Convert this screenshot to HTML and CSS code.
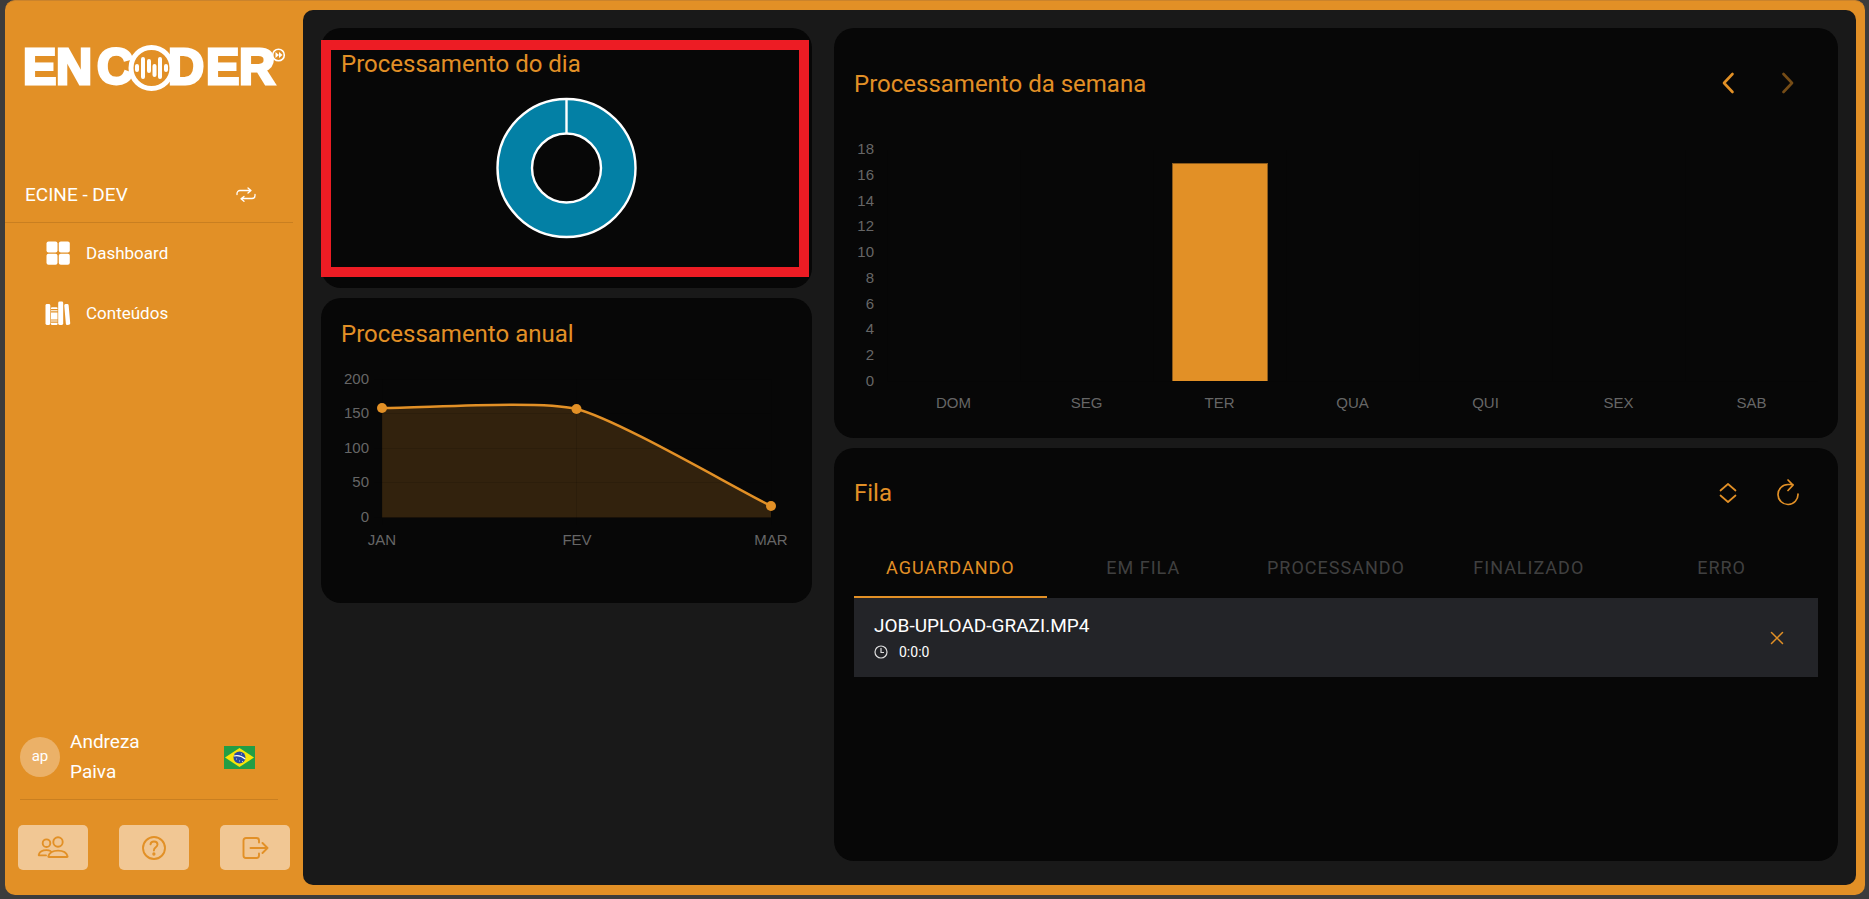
FILE: index.html
```html
<!DOCTYPE html>
<html lang="pt-BR">
<head>
<meta charset="utf-8">
<title>Encoder - Dashboard</title>
<link rel="stylesheet" href="styles.css">
</head>
<body>
<div class="app">
  <aside class="sidebar">
    <svg class="logo" width="272" height="80" viewBox="20 30 272 80" role="img" aria-label="Encoder">
      <g class="logo-text">
        <text y="84" x="23 56 97">ENC</text>
        <text y="84" x="168 206 239">DER</text>
      </g>
      <circle cx="151.500" cy="68" r="20.500" fill="#e29026" stroke="#fff" stroke-width="5"/>
      <g stroke="#fff" stroke-width="4" stroke-linecap="round">
        <path d="M137 66v4M143 59v18M149 61v10M154.500 66v9M160 59v18M166 66v4"/>
      </g>
      <circle cx="278.500" cy="55" r="5.800" fill="#e29026" stroke="#fff" stroke-width="1.600"/>
      <path d="M275.500 52l3.500 3-3.500 3zM279 52l3.500 3-3.500 3z" fill="#fff"/>
    </svg>
    <div class="account">
      <span>ECINE - DEV</span>
      <button class="plain" type="button" aria-label="Trocar conta">
        <svg width="20" height="16" viewBox="0 0 20 16" fill="none" stroke="#fff" stroke-width="1.300" stroke-linecap="round" stroke-linejoin="round"><path d="M1 7.500V6.500A3 3 0 0 1 4 3.500H14.500M12 1l3 2.500L12 6M19 7.500v1a3 3 0 0 1-3 3H5.500M8 9.500L5 11.800 8 14.300"/></svg>
      </button>
    </div>
    <nav class="menu">
      <a href="#dashboard">
        <svg width="26" height="26" viewBox="0 0 26 26" fill="#fff"><rect x="1.500" y="1.500" width="11" height="11" rx="2"/><rect x="13.800" y="1.500" width="11" height="11" rx="2"/><rect x="1.500" y="13.800" width="11" height="11" rx="2"/><rect x="13.800" y="13.800" width="11" height="11" rx="2"/></svg>
        Dashboard
      </a>
      <a href="#conteudos">
        <svg width="26" height="26" viewBox="0 0 26 26" fill="#fff"><rect x=".5" y="4" width="4.800" height="21" rx="1.400"/><path d="M6 9V8.200a1 1 0 0 1 1-1h4.500a1 1 0 0 1 1 1V9zM6 10.300h6.500v1H6zM6 12.500h6.500v7H6zM6 20.500h6.500v1H6zM6 22.700h6.500V24a1 1 0 0 1-1 1H7a1 1 0 0 1-1-1z"/><rect x="13.200" y="1.500" width="5" height="23.500" rx="1.400"/><rect x="20" y="4" width="4.400" height="21" rx="1.400" transform="rotate(-5 22 14)"/></svg>
        Conteúdos
      </a>
    </nav>
    <div class="user">
      <span class="avatar">ap</span>
      <span class="user-name">Andreza Paiva</span>
      <svg class="flag" width="31" height="23" viewBox="0 0 31 23" role="img" aria-label="Português (Brasil)"><path fill="#229e45" d="M0 0h31v23H0z"/><path fill="#f8e509" d="M15.500 2L30 11.500 15.500 21 1 11.500z"/><circle cx="15.500" cy="11.500" r="6" fill="#2b49a3"/><path d="M10 10q6-1.500 11.200 3" fill="none" stroke="#ffffef" stroke-width="1.200"/><path d="M12 13h1M15 15h1M18 15.500h1M17 8h1" stroke="#ffffef" stroke-width=".7"/></svg>
    </div>
    <div class="actions">
      <button type="button" aria-label="Usuários">
        <svg width="32" height="26" viewBox="0 0 32 26" fill="none" stroke="#e29026" stroke-width="1.900" stroke-linecap="round" stroke-linejoin="round"><circle cx="21" cy="7" r="4.700"/><circle cx="9.500" cy="8.200" r="3.800"/><path d="M12 22c-.6 0-.8-.5-.6-1C12.500 17.300 16.500 15.600 21 15.600s8.500 1.700 9.500 5.400c.2.500 0 1-.6 1zM13.500 16c-1.200-.6-2.500-.9-4-.9-4 0-6.800 1.700-7.700 4.400-.2.500 0 .9.600.9H9"/></svg>
      </button>
      <button type="button" aria-label="Ajuda">
        <svg width="26" height="26" viewBox="0 0 26 26" fill="none" stroke="#e29026" stroke-width="1.900" stroke-linecap="round" stroke-linejoin="round"><circle cx="13" cy="13" r="11"/><path d="M9.500 9.300C9.700 7.300 11.200 6.500 13 6.500c2 0 3.500 1.200 3.500 3 0 3-3.600 2.700-3.600 6"/><circle cx="12.900" cy="19" r=".7" fill="#e29026"/></svg>
      </button>
      <button type="button" aria-label="Sair">
        <svg width="28" height="26" viewBox="0 0 28 26" fill="none" stroke="#e29026" stroke-width="1.900" stroke-linecap="round" stroke-linejoin="round"><path d="M18 7.500V5.500a2.500 2.500 0 0 0-2.500-2.500H5a2.500 2.500 0 0 0-2.500 2.500v15A2.500 2.500 0 0 0 5 23h10.500a2.500 2.500 0 0 0 2.500-2.500v-2M9.500 13H26.500M21.500 8l5 5-5 5"/></svg>
      </button>
    </div>
  </aside>

  <main class="panel">
    <div class="column">
      <section class="card day">
        <h2>Processamento do dia</h2>
        <svg class="donut" width="140" height="140" viewBox="0 0 140 140" role="img" aria-label="Gráfico do dia"><path d="M69.500 1a69 69 0 1 1 0 138a69 69 0 1 1 0-138zM69.500 35.500a34.500 34.500 0 1 0 0 69a34.500 34.500 0 1 0 0-69z" fill="#0380a5" stroke="#fff" stroke-width="2.400"/><path d="M69.500 1v34.500" stroke="#fff" stroke-width="2.400"/></svg>
        <div class="highlight"></div>
      </section>
      <section class="card year">
        <h2>Processamento anual</h2>
        <svg class="area-chart" viewBox="341 364 451 190" role="img" aria-label="Gráfico anual">
          <path d="M382 409C421 409.200 539.800 400.800 576.500 410C617.500 420.300 732 487.600 771 507V518.500H382z" fill="#e29026" fill-opacity=".2"/>
          <path class="grid-line" d="M374 380.500H771M374 414.500H771M374 449.500H771M374 483.500H771M374 518.500H771M382.500 380V526M576.500 380V526M771.500 380V526"/>
          <path d="M382 409C421 409.200 539.800 400.800 576.500 410C617.500 420.300 732 487.600 771 507" fill="none" stroke="#e29026" stroke-width="2.400"/>
          <g fill="#e29026"><circle cx="382" cy="409" r="5"/><circle cx="576.500" cy="410" r="5"/><circle cx="771" cy="507" r="5"/></g>
          <g class="ticks" text-anchor="end">
            <text x="369" y="385">200</text><text x="369" y="419">150</text><text x="369" y="454">100</text><text x="369" y="488">50</text><text x="369" y="523">0</text>
          </g>
          <g class="ticks" text-anchor="middle">
            <text x="382" y="546">JAN</text><text x="577" y="546">FEV</text><text x="771" y="546">MAR</text>
          </g>
        </svg>
      </section>
    </div>

    <div class="column">
      <section class="card week">
        <header>
          <h2>Processamento da semana</h2>
          <button class="plain" type="button" aria-label="Semana anterior"><svg width="26" height="26" viewBox="0 0 26 26"><path d="M17.500 3L9 12l8.500 9" fill="none" stroke="#e29026" stroke-width="2.600" stroke-linecap="round" stroke-linejoin="round"/></svg></button>
          <button class="plain" type="button" aria-label="Próxima semana" disabled><svg width="26" height="26" viewBox="0 0 26 26"><path d="M8.500 3l8.500 9-8.500 9" fill="none" stroke="#e29026" stroke-width="2.600" stroke-linecap="round" stroke-linejoin="round"/></svg></button>
        </header>
        <div class="bar-chart">
          <div class="scale"><span>18</span><span>16</span><span>14</span><span>12</span><span>10</span><span>8</span><span>6</span><span>4</span><span>2</span><span>0</span></div>
          <div class="plot"><i></i><i></i><i><b class="bar" style="height:94.4%"></b></i><i></i><i></i><i></i><i></i></div>
          <div class="days"><span>DOM</span><span>SEG</span><span>TER</span><span>QUA</span><span>QUI</span><span>SEX</span><span>SAB</span></div>
        </div>
      </section>

      <section class="card queue">
        <header>
          <h2>Fila</h2>
          <button class="plain" type="button" aria-label="Expandir"><svg width="26" height="26" viewBox="0 0 26 26"><path d="M5.500 10.500L13 4l7.500 6.500M5.500 15.500L13 22l7.500-6.500" fill="none" stroke="#e29026" stroke-width="1.700" stroke-linecap="round" stroke-linejoin="round"/></svg></button>
          <button class="plain" type="button" aria-label="Atualizar"><svg width="26" height="28" viewBox="0 0 26 28"><path d="M23 15A10 10 0 1 1 13 5.500H18M13 1l5 5.200-5 5.300" fill="none" stroke="#e29026" stroke-width="1.700" stroke-linecap="round" stroke-linejoin="round"/></svg></button>
        </header>
        <div class="tabs" role="tablist">
          <button type="button" role="tab" aria-selected="true">AGUARDANDO</button>
          <button type="button" role="tab" aria-selected="false">EM FILA</button>
          <button type="button" role="tab" aria-selected="false">PROCESSANDO</button>
          <button type="button" role="tab" aria-selected="false">FINALIZADO</button>
          <button type="button" role="tab" aria-selected="false">ERRO</button>
        </div>
        <div class="job">
          <div class="job-info">
            <span class="job-name">JOB-UPLOAD-GRAZI.MP4</span>
            <span class="job-time"><svg width="14" height="14" viewBox="0 0 14 14" fill="none" stroke="#ddd" stroke-width="1.200"><circle cx="7" cy="7" r="6"/><path d="M7 3v4.500h3"/></svg>0:0:0</span>
          </div>
          <button class="plain" type="button" aria-label="Remover"><svg width="14" height="14" viewBox="0 0 14 14"><path d="M1.500 1.500l11 11M12.500 1.500l-11 11" stroke="#e29026" stroke-width="1.500" stroke-linecap="round"/></svg></button>
        </div>
      </section>
    </div>
  </main>
</div>
</body>
</html>
```
FILE: styles.css
```css
* { box-sizing: border-box; }

body {
  display: flex;
  min-height: 100vh;
  margin: 0;
  padding: 0 4px 4px 5px;
  background: #3c3c3c;
  color: #fff;
  font-family: Roboto, "Liberation Sans", sans-serif;
}

h2 {
  margin: 0;
  color: #e29026;
  font-size: 24px;
  font-weight: 400;
  line-height: 30px;
}

button {
  padding: 0;
  border: 0;
  font: inherit;
  color: inherit;
  cursor: pointer;
}

.plain { background: none; }
.plain:disabled { opacity: .5; }
svg { display: block; }

.app {
  display: flex;
  flex: 1;
  min-width: 0;
  background: #e29026;
  border-top: 1px solid #ca832c;
  border-radius: 10px;
}

/* Sidebar */
.sidebar {
  display: flex;
  flex-direction: column;
  width: 298px;
  flex: none;
}

.logo { margin: 29px 0 0 15px; }

.logo-text {
  fill: #fff;
  stroke: #fff;
  stroke-width: 3px;
  font-family: "Liberation Sans", Arial, sans-serif;
  font-size: 50px;
  font-weight: 700;
}

.account {
  display: flex;
  align-items: center;
  justify-content: space-between;
  height: 56px;
  margin: 57px 10px 0 0;
  padding: 0 37px 0 20px;
  border-bottom: 1px solid #c97f20;
  font-size: 19px;
}

.menu { display: flex; flex-direction: column; }

.menu a {
  display: flex;
  align-items: center;
  gap: 15px;
  height: 60px;
  padding-left: 40px;
  color: #fff;
  font-size: 17px;
  text-decoration: none;
}

.user {
  display: flex;
  align-items: center;
  margin: auto 25px 0 15px;
  padding-bottom: 12px;
  border-bottom: 1px solid #c97f20;
}

.avatar {
  width: 40px;
  height: 40px;
  border-radius: 50%;
  background: #ebb168;
  font-size: 15px;
  line-height: 38px;
  text-align: center;
}

.user-name {
  width: 90px;
  margin-left: 10px;
  font-size: 19px;
  line-height: 30px;
}

.flag { margin: 0 23px 0 auto; }

.actions {
  display: flex;
  justify-content: space-between;
  margin: 25px 13px 25px;
}

.actions button {
  display: grid;
  place-items: center;
  width: 70px;
  height: 45px;
  border-radius: 5px;
  background: #f1c794;
}

/* Dashboard */
.panel {
  display: grid;
  grid-template-columns: 491fr 1004fr;
  gap: 22px;
  flex: 1;
  min-width: 0;
  margin: 9px 9px 10px 0;
  padding: 18px 18px 24px;
  border-radius: 10px;
  background: #191919;
}

.column {
  display: flex;
  flex-direction: column;
  gap: 10px;
  min-width: 0;
}

.card {
  padding: 21px 20px 50px;
  border-radius: 20px;
  background: #070707;
}

.card header { display: flex; align-items: center; height: 60px; }
.card header h2 { flex: 1; }

.card header button {
  display: grid;
  place-items: center;
  width: 60px;
  height: 60px;
}

.day { position: relative; }
.donut { margin: 19px auto 0; overflow: visible; }

.highlight {
  position: absolute;
  inset: 12px 3px 11px 0;
  border: 10px solid #ed1c24;
}

.area-chart { width: 100%; margin-top: 14px; }
.grid-line { stroke: #000; stroke-opacity: .1; }

.ticks {
  fill: #666;
  font-family: "Liberation Sans", Arial, sans-serif;
  font-size: 15px;
}

.week { padding: 26px 20px 24px; }

.bar-chart {
  display: grid;
  grid-template: 250px 24px / 20px 1fr;
  column-gap: 13px;
  margin-top: 26px;
  color: #666;
  font-family: "Liberation Sans", Arial, sans-serif;
  font-size: 15px;
  line-height: 18px;
}

.scale {
  display: flex;
  flex-direction: column;
  justify-content: space-between;
  text-align: right;
}

.plot, .days { display: grid; grid-template-columns: repeat(7, 1fr); }

.plot {
  margin: 10px 0 8px;
  border-bottom: 1px solid #060606;
}

.plot i {
  display: flex;
  align-items: flex-end;
  justify-content: center;
  border-left: 1px solid #060606;
}

.bar {
  width: 73%;
  background: #e29026;
  border: 1px solid #8a5a1c;
  border-bottom: 0;
}

.days { grid-column: 2; padding-top: 4px; text-align: center; }

.queue { flex: 1; padding-top: 15px; }

.tabs {
  display: grid;
  grid-template-columns: repeat(5, 1fr);
  margin-top: 15px;
}

.tabs button {
  height: 60px;
  border-bottom: 2px solid transparent;
  background: none;
  color: #404040;
  font-size: 18px;
  letter-spacing: 1px;
}

.tabs [aria-selected="true"] { color: #e29026; border-color: #e29026; }

.job {
  display: flex;
  align-items: center;
  justify-content: space-between;
  height: 79px;
  padding: 0 34px 0 20px;
  background: #232428;
}

.job-info { display: flex; flex-direction: column; gap: 2px; }
.job-name { font-size: 19px; line-height: 26px; }

.job-time {
  display: flex;
  align-items: center;
  gap: 11px;
  font-size: 14px;
  line-height: 22px;
}
```
